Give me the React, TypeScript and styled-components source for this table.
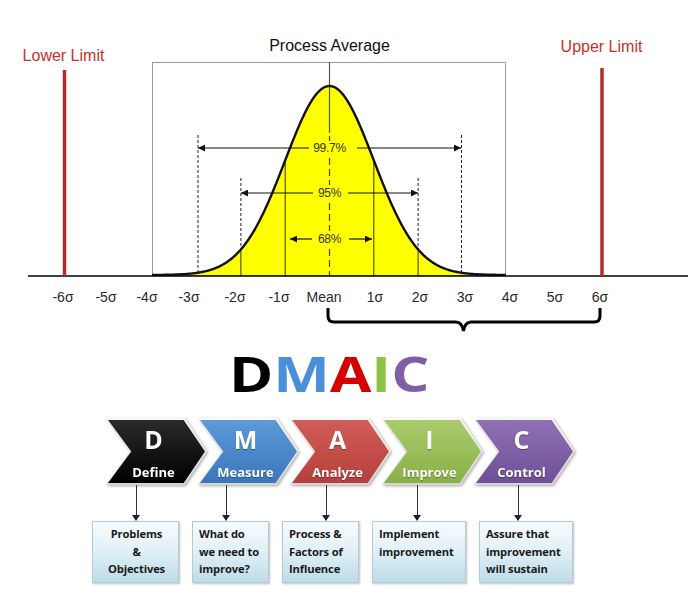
import React from "react";
import styled, { createGlobalStyle } from "styled-components";

const GlobalStyle = createGlobalStyle`
  html, body {
    margin: 0;
    padding: 0;
    background: #ffffff;
  }
  body {
    font-family: "Liberation Sans", Arial, sans-serif;
  }
`;

const Page = styled.div`
  width: 697px;
  height: 593px;
  display: flex;
  flex-direction: column;
  background: #ffffff;
  overflow: hidden;
`;

const ChartSvg = styled.svg`
  display: block;
  flex: none;
  width: 697px;
  height: 340px;
  font-family: "Liberation Sans", Arial, sans-serif;
`;

const Title = styled.h1`
  margin: 0;
  height: 65px;
  padding: 1px 38px 0 0;
  box-sizing: border-box;
  display: flex;
  justify-content: center;
  font: 700 48px/65px "Open Sans", sans-serif;
`;

const TitleWord = styled.span`
  display: inline-block;
  transform: scaleX(1.25);
`;

const TitleLetter = styled.span<{ $color: string }>`
  color: ${(p) => p.$color};
`;

const ChevronRow = styled.div`
  display: flex;
  margin-top: 13px;
  padding-left: 106px;
  height: 67px;
`;

const ChevronSlot = styled.div`
  flex: none;
  margin-left: -9px;
  filter: drop-shadow(1px 1px 1.5px rgba(0, 0, 0, 0.35));
  &:first-child {
    margin-left: 0;
  }
`;

const chevronClip = "polygon(0 0, 78% 0, 100% 50%, 78% 100%, 0 100%, 24% 50%)";

const Chevron = styled.div`
  width: 101px;
  height: 67px;
  box-sizing: border-box;
  padding: 2px;
  clip-path: ${chevronClip};
  background: linear-gradient(#fafafa, #d4d4d4);
`;

const ChevronFace = styled.div<{ $top: string; $bottom: string }>`
  height: 100%;
  box-sizing: border-box;
  clip-path: ${chevronClip};
  background: linear-gradient(${(p) => p.$top}, ${(p) => p.$bottom});
  display: flex;
  flex-direction: column;
  align-items: center;
  padding: 6px 6px 0 0;
  color: #ffffff;
  font-family: "Open Sans", sans-serif;
  font-weight: 700;
  text-shadow: 0 1px 1px rgba(0, 0, 0, 0.35);
`;

const StepLetter = styled.span`
  font-size: 25px;
  line-height: 26px;
`;

const StepName = styled.span`
  margin-top: 12px;
  font-size: 13px;
  line-height: 16px;
`;

const DetailRow = styled.div`
  display: flex;
  gap: 13px;
  padding-left: 92px;
`;

const Detail = styled.div<{ $w: number }>`
  display: flex;
  flex-direction: column;
  width: ${(p) => p.$w}px;
`;

const Connector = styled.div<{ $at: number }>`
  position: relative;
  width: 9px;
  height: 36px;
  margin-left: ${(p) => p.$at - 4.5}px;
  &::before {
    content: "";
    position: absolute;
    left: 4px;
    top: 0;
    bottom: 5px;
    width: 1px;
    background: #333333;
  }
  &::after {
    content: "";
    position: absolute;
    left: 0.5px;
    bottom: 0;
    border-left: 4px solid transparent;
    border-right: 4px solid transparent;
    border-top: 6px solid #222222;
  }
`;

const NoteBox = styled.div<{ $center?: boolean }>`
  height: 62px;
  box-sizing: border-box;
  border: 1px solid #b7c9d2;
  background: linear-gradient(#f7fbfd, #e3f1f7 45%, #bcdce9);
  box-shadow: 1px 1px 2px rgba(0, 0, 0, 0.25);
  padding: 3px 4px 0 6px;
  font: 700 11.2px/17.5px "Open Sans", sans-serif;
  letter-spacing: -0.15px;
  color: #1a1a1a;
  white-space: pre;
  text-align: ${(p) => (p.$center ? "center" : "left")};
`;

// chart geometry
const MEAN = 329.5;
const SIG = 44.3;
const BASE = 275;
const PEAK = 189;
const AXIS = 276;

const curveY = (x: number) =>
  BASE - PEAK * Math.exp(-(((x - MEAN) / SIG) ** 2) / 2);

const curvePoints: string[] = [];
for (let x = 152; x <= 506; x += 1) {
  curvePoints.push(`${x},${curveY(x).toFixed(2)}`);
}
const curveLine = "M" + curvePoints.join(" L");
const curveFill = `M152,${BASE} L${curvePoints.join(" L")} L506,${BASE} Z`;

const sigmaLabels: [string, number][] = [
  ["-6σ", 63],
  ["-5σ", 106],
  ["-4σ", 147],
  ["-3σ", 189],
  ["-2σ", 235],
  ["-1σ", 279],
  ["Mean", 324],
  ["1σ", 375],
  ["2σ", 420],
  ["3σ", 465],
  ["4σ", 510],
  ["5σ", 555],
  ["6σ", 600],
];

const arrows = [
  { y: 148, text: "99.7%", from: [309, 357], to: [198, 461] },
  { y: 193, text: "95%", from: [313, 348], to: [241, 418] },
  { y: 239, text: "68%", from: [312, 349], to: [290, 372] },
];

const meanDashes: [number, number][] = [
  [136, 141],
  [158, 185],
  [203, 231],
  [249, 276],
];

function SigmaChart() {
  const x1 = [MEAN - SIG, MEAN + SIG];
  const x2 = [MEAN - 2 * SIG, MEAN + 2 * SIG];
  const x3 = [198, 461.5];

  return (
    <ChartSvg viewBox="0 0 697 340">
      <defs>
        <marker
          id="head"
          viewBox="0 0 10 10"
          refX="10"
          refY="5"
          markerWidth="8"
          markerHeight="7"
          markerUnits="userSpaceOnUse"
          orient="auto"
        >
          <path d="M0,0 L10,5 L0,10 z" fill="#111" />
        </marker>
      </defs>

      <text x="329.5" y="51" fontSize="16" textAnchor="middle" fill="#111">
        Process Average
      </text>
      <text x="63.5" y="60.5" fontSize="16" textAnchor="middle" fill="#c8302c">
        Lower Limit
      </text>
      <text x="601.5" y="51.5" fontSize="16" textAnchor="middle" fill="#c8302c">
        Upper Limit
      </text>

      <rect x="152.5" y="62.5" width="353" height="213" fill="none" stroke="#9a9a9a" />

      <path d={curveFill} fill="#ffff00" />

      {x1.map((x) => (
        <line key={x} x1={x} x2={x} y1={curveY(x)} y2={AXIS} stroke="#333" strokeWidth="1" />
      ))}
      {x2.map((x) => (
        <g key={x}>
          <line x1={x} x2={x} y1={178} y2={curveY(x)} stroke="#222" strokeDasharray="3 2" />
          <line x1={x} x2={x} y1={curveY(x)} y2={AXIS} stroke="#333" />
        </g>
      ))}
      {x3.map((x) => (
        <line key={x} x1={x} x2={x} y1={135} y2={AXIS} stroke="#222" strokeDasharray="3 2" />
      ))}

      <line x1={MEAN} x2={MEAN} y1={62} y2={133} stroke="#555" strokeWidth="1.2" />
      {meanDashes.map(([a, b]) => (
        <line key={a} x1={MEAN} x2={MEAN} y1={a} y2={b} stroke="#444" strokeWidth="1.2" strokeDasharray="7 4" />
      ))}

      <path d={curveLine} fill="none" stroke="#111" strokeWidth="2.4" strokeLinejoin="round" />

      {arrows.map((a) => (
        <g key={a.text}>
          <line x1={a.from[0]} x2={a.to[0]} y1={a.y} y2={a.y} stroke="#111" strokeWidth="1.2" markerEnd="url(#head)" />
          <line x1={a.from[1]} x2={a.to[1]} y1={a.y} y2={a.y} stroke="#111" strokeWidth="1.2" markerEnd="url(#head)" />
          <text x={MEAN} y={a.y + 4} fontSize="12" textAnchor="middle" fill="#333" letterSpacing="-0.3">
            {a.text}
          </text>
        </g>
      ))}

      <line x1="28" x2="688" y1={AXIS} y2={AXIS} stroke="#000" strokeWidth="1.5" />
      <line x1="64.5" x2="64.5" y1="70" y2={AXIS} stroke="#b22d2d" strokeWidth="3.5" />
      <line x1="602" x2="602" y1="68" y2={AXIS} stroke="#b22d2d" strokeWidth="3.5" />

      {sigmaLabels.map(([label, x]) => (
        <text key={label} x={x} y="302" fontSize="14" textAnchor="middle" fill="#2a2a2a">
          {label}
        </text>
      ))}

      <path
        d="M328,308 L328,316 Q328,322 334,322 L456,322 Q462,322 463.5,331 Q465,322 471,322 L594,322 Q600,322 600,316 L600,308"
        fill="none"
        stroke="#000"
        strokeWidth="3"
      />
    </ChartSvg>
  );
}

const titleLetters: [string, string][] = [
  ["D", "#000000"],
  ["M", "#4b8fd8"],
  ["A", "#d40000"],
  ["I", "#8dc349"],
  ["C", "#7e5fa6"],
];

const steps = [
  { letter: "D", name: "Define", top: "#2b2b2b", bottom: "#000000" },
  { letter: "M", name: "Measure", top: "#5c9ad8", bottom: "#3b76bb" },
  { letter: "A", name: "Analyze", top: "#d25c58", bottom: "#b53f3b" },
  { letter: "I", name: "Improve", top: "#aacb6c", bottom: "#89b048" },
  { letter: "C", name: "Control", top: "#8f71b5", bottom: "#6f4f98" },
];

const details = [
  { w: 87, at: 44, center: true, text: "Problems\n&\nObjectives" },
  { w: 77, at: 34, center: false, text: "What do\nwe need to\nimprove?" },
  { w: 77, at: 44, center: false, text: "Process &\nFactors of\nInfluence" },
  { w: 94, at: 45, center: false, text: "Implement\nimprovement" },
  { w: 94, at: 39, center: false, text: "Assure that\nimprovement\nwill sustain" },
];

export default function App() {
  return (
    <>
      <GlobalStyle />
      <Page>
        <SigmaChart />
        <Title>
          <TitleWord>
            {titleLetters.map(([l, c]) => (
              <TitleLetter key={l} $color={c}>
                {l}
              </TitleLetter>
            ))}
          </TitleWord>
        </Title>
        <ChevronRow>
          {steps.map((s) => (
            <ChevronSlot key={s.letter}>
              <Chevron>
                <ChevronFace $top={s.top} $bottom={s.bottom}>
                  <StepLetter>{s.letter}</StepLetter>
                  <StepName>{s.name}</StepName>
                </ChevronFace>
              </Chevron>
            </ChevronSlot>
          ))}
        </ChevronRow>
        <DetailRow>
          {details.map((d) => (
            <Detail key={d.text} $w={d.w}>
              <Connector $at={d.at} />
              <NoteBox $center={d.center}>{d.text}</NoteBox>
            </Detail>
          ))}
        </DetailRow>
      </Page>
    </>
  );
}
